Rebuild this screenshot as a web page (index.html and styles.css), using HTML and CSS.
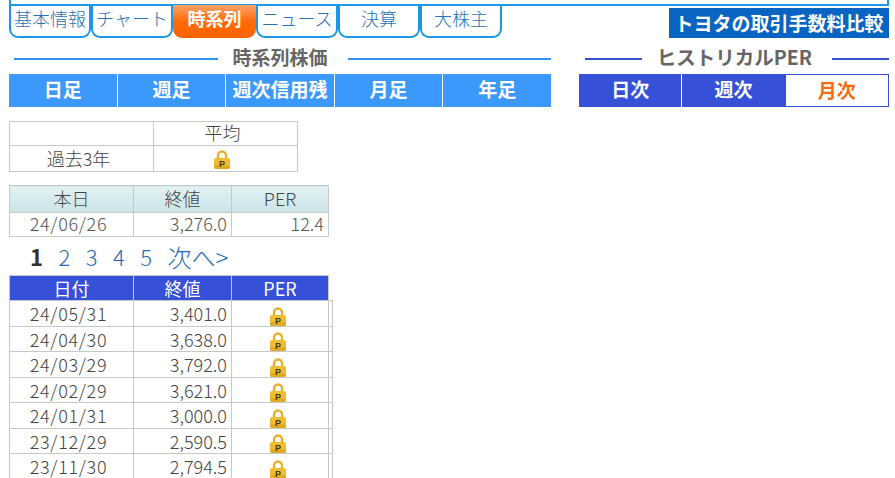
FILE: index.html
```html
<!DOCTYPE html>
<html lang="ja">
<head>
    <meta charset="UTF-8">
    <title>トヨタ 時系列</title>
    <link rel="stylesheet" href="styles.css">
</head>
<body>
    <svg class="defs" width="0" height="0">
        <symbol id="lock" viewBox="0 0 16 19">
            <path d="M4 9V5.5a4 4 0 0 1 8 0V9" fill="none" stroke="#e6b02e" stroke-width="2.4"/>
            <rect x="0" y="8" width="16" height="11" rx="2" fill="#f0bd30"/>
            <rect x="0" y="15" width="16" height="4" rx="2" fill="#e2aa20"/>
            <text x="8" y="16.5" font-size="9" font-weight="700" font-family="Liberation Sans" text-anchor="middle" fill="#4a3a10">P</text>
        </symbol>
    </svg>

    <!-- tabs -->
    <div class="topbar"></div>
    <div class="tabrow">
        <a class="tab">基本情報</a>
        <a class="tab">チャート</a>
        <a class="tab active">時系列</a>
        <a class="tab">ニュース</a>
        <a class="tab">決算</a>
        <a class="tab">大株主</a>
        <a class="compare">トヨタの取引手数料比較</a>
    </div>

    <!-- period selectors -->
    <div class="selectors">
        <div class="sel-left">
            <div class="heading"><span>時系列株価</span></div>
            <div class="periods">
                <a>日足</a><a>週足</a><a>週次信用残</a><a>月足</a><a>年足</a>
            </div>
        </div>
        <div class="sel-right">
            <div class="heading dark"><span>ヒストリカルPER</span></div>
            <div class="periods dark">
                <a>日次</a><a>週次</a><a class="current">月次</a>
            </div>
        </div>
    </div>

    <table class="grid avg">
        <tr><td class="c1"></td><td class="mid">平均</td></tr>
        <tr><td class="c1 mid">過去3年</td><td><svg class="lock"><use href="#lock"/></svg></td></tr>
    </table>

    <table class="grid today">
        <tr class="pale"><th class="date">本日</th><th class="price">終値</th><th class="per">PER</th></tr>
        <tr><td class="day">24/06/26</td><td class="num">3,276.0</td><td class="num">12.4</td></tr>
    </table>

    <div class="pager">
        <b>1</b><a>2</a><a>3</a><a>4</a><a>5</a><a class="next">次へ&gt;</a>
    </div>

    <table class="grid history">
        <thead>
            <tr class="blue"><th class="date">日付</th><th class="price">終値</th><th class="per">PER</th><th class="gap"></th></tr>
        </thead>
        <tbody id="rows"></tbody>
    </table>

    <script>
        const data = [
            ['24/05/31', '3,401.0'],
            ['24/04/30', '3,638.0'],
            ['24/03/29', '3,792.0'],
            ['24/02/29', '3,621.0'],
            ['24/01/31', '3,000.0'],
            ['23/12/29', '2,590.5'],
            ['23/11/30', '2,794.5']
        ];
        const rows = document.getElementById('rows');
        data.forEach(d => {
            const row = document.createElement('tr');
            row.innerHTML = `
                <td class="day">${d[0]}</td>
                <td class="num">${d[1]}</td>
                <td class="lockcell"><svg class="lock"><use href="#lock"/></svg></td>
                <td></td>
            `;
            rows.appendChild(row);
        });
    </script>
</body>
</html>
```

FILE: styles.css
```css
html, body {
    margin: 0;
    height: 478px;
    overflow: hidden;
    background: #fff;
}

body {
    font-family: "Noto Sans CJK JP", "Noto Sans", sans-serif;
    color: #333;
    font-size: 16px;
}

a {
    text-decoration: none;
}

.defs {
    display: block;
    height: 0;
}

.topbar {
    box-sizing: border-box;
    height: 6px;
    margin: 0 6px 0 9px;
    border: 2px solid #1b97e4;
    border-top: 0;
}

.tabrow {
    display: flex;
    height: 33px;
    padding-left: 9px;
    padding-right: 6px;
}

.tab {
    box-sizing: border-box;
    width: 82px;
    height: 33px;
    margin-top: -1px;
    border: 2px solid #1b97e4;
    border-top: 0;
    border-radius: 0 0 9px 9px;
    color: #2a72b8;
    font-size: 18px;
    font-weight: 300;
    line-height: 27px;
    text-align: center;
    white-space: nowrap;
}

.tab.active {
    width: 83px;
    border: 0;
    background: linear-gradient(#ffa468 0%, #ff6a08 50%, #fb6400 100%);
    color: #fff;
    font-weight: 700;
    line-height: 27px;
}

.compare {
    margin-left: auto;
    margin-top: 2px;
    width: 220px;
    height: 30px;
    background: #0a64c2;
    color: #fff;
    font-size: 19px;
    font-weight: 700;
    line-height: 29px;
    text-align: center;
    white-space: nowrap;
}

.selectors {
    display: flex;
    gap: 28px;
    margin-left: 9px;
    margin-top: 6px;
}

.sel-left {
    width: 542px;
}

.sel-right {
    width: 310px;
}

.heading {
    display: flex;
    align-items: center;
    height: 27px;
    padding-left: 5px;
    color: #666;
    font-size: 19px;
    font-weight: 700;
    line-height: 24px;
    white-space: nowrap;
}

.heading span {
    padding: 0 20px 3px 15px;
}

.heading::before,
.heading::after {
    content: "";
    flex: 1;
    border-top: 2px solid #2f95ec;
}

.heading.dark::before,
.heading.dark::after {
    border-top-color: #3650d8;
}

.heading.dark {
    padding-left: 6px;
    font-size: 19.5px;
}

.periods {
    display: flex;
    height: 33px;
    margin-top: 2px;
    background: #3b99fc;
}

.periods a {
    flex: 1;
    border-left: 1px solid #fff;
    color: #fff;
    font-size: 19px;
    font-weight: 700;
    line-height: 29px;
    text-align: center;
    white-space: nowrap;
}

.periods a:first-child {
    border-left: 0;
}

.periods.dark {
    background: #3650d8;
}

.periods .current {
    box-sizing: border-box;
    border: 1px solid #3650d8;
    background: #fff;
    color: #f26a12;
}

.grid {
    border-collapse: collapse;
    table-layout: fixed;
    color: #444;
    font-size: 18px;
    font-weight: 300;
}

.grid th,
.grid td {
    padding: 0;
    border: 1px solid #c8c8c8;
    font-weight: 300;
    text-align: center;
    line-height: 20px;
}

.avg {
    width: 289px;
    margin: 14px 0 0 9px;
}

.avg .c1 {
    width: 143px;
}

.avg tr:first-child td {
    height: 20px;
    padding-bottom: 3px;
}

.avg tr:last-child td {
    height: 24px;
    padding-bottom: 1px;
}

.avg .lock {
    position: relative;
    left: -4px;
}

.grid .mid,
.grid .day {
    padding-right: 6px;
}

.day {
    letter-spacing: 0.7px;
}

.today {
    width: 320px;
    margin: 13px 0 0 9px;
}

.date {
    width: 123px;
}

.price {
    width: 97px;
}

.per {
    width: 96px;
}

.pale th {
    height: 24px;
    padding-bottom: 2px;
    background: linear-gradient(#e2f1f3, #cbe4e9);
}

.today td {
    height: 20px;
    padding-bottom: 3px;
    color: #555;
}

.grid .num {
    padding-right: 4px;
    text-align: right;
}

.pager {
    display: flex;
    align-items: center;
    height: 28px;
    margin-top: 6px;
    padding-left: 30px;
    padding-bottom: 2px;
    box-sizing: border-box;
    font-size: 22px;
    color: #333;
}

.pager a {
    margin-left: 15.5px;
    color: #1a6ab4;
    font-weight: 300;
}

.pager .next {
    font-size: 24px;
}

.history {
    width: 323px;
    margin: 4px 0 0 9px;
}

.grid .blue th {
    height: 24px;
    background: #3650d8;
    color: #fff;
    font-weight: 400;
}

.grid .blue .gap {
    width: 3px;
    background: none;
    border-top: 0;
    border-right: 0;
}

.history td {
    height: 24.5px;
}

.lockcell {
    vertical-align: bottom;
}

.lock {
    display: block;
    width: 16px;
    height: 19px;
    margin: 2px auto 0;
}

.lockcell .lock {
    position: relative;
    left: -2px;
}
```
